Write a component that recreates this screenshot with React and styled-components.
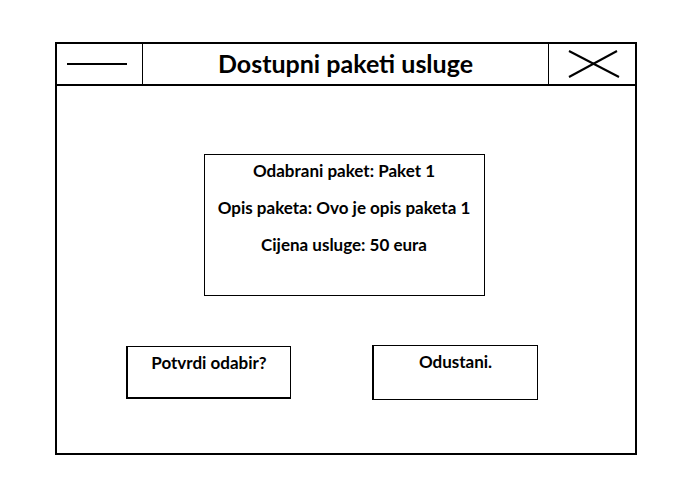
import React from 'react';
import styled, { createGlobalStyle } from 'styled-components';

const GlobalStyle = createGlobalStyle`
  html, body {
    margin: 0;
    padding: 0;
    background: #ffffff;
  }

  body {
    font-family: Lato, "Open Sans", sans-serif;
    color: #000000;
  }
`;

const Page = styled.div`
  width: 692px;
  height: 485px;
  padding: 42px 0 0 55px;
  box-sizing: border-box;
`;

const Frame = styled.div`
  width: 582px;
  height: 413px;
  box-sizing: border-box;
  border: 2px solid #000;
  display: flex;
  flex-direction: column;
`;

const Header = styled.div`
  height: 44px;
  margin: -2px -2px 0 -2px;
  display: flex;
  align-items: stretch;
  border-bottom: 2px solid #000;
  border-top: 2px solid #000;
  box-sizing: border-box;
`;

const HeaderBox = styled.button`
  width: ${({ $width }) => $width}px;
  padding: 0;
  margin: -2px 0 -2px 0;
  background: #fff;
  border: 2px solid #000;
  ${({ $side }) => ($side === 'left' ? 'border-right-width: 1px;' : 'border-left-width: 1px;')}
  display: flex;
  align-items: center;
  justify-content: center;
  cursor: pointer;
`;

const Title = styled.h1`
  flex: 1;
  margin: 0;
  text-align: center;
  font-size: 25px;
  font-weight: 700;
  line-height: 38px;
`;

const Body = styled.div`
  flex: 1;
  display: flex;
  flex-direction: column;
  align-items: center;
  padding: 68px 4px 0 0;
`;

const InfoBox = styled.div`
  width: 281px;
  height: 142px;
  box-sizing: border-box;
  border: 1px solid #000;
  display: flex;
  flex-direction: column;
  align-items: center;
  padding-top: 4px;
  gap: 13px;
`;

const InfoLine = styled.p`
  margin: 0;
  font-size: 17px;
  font-weight: 700;
  line-height: 24px;
`;

const Actions = styled.div`
  align-self: stretch;
  display: flex;
  align-items: flex-start;
  gap: 81px;
  padding-left: 69px;
  margin-top: 49px;
`;

const ActionButton = styled.button`
  width: ${({ $width }) => $width}px;
  height: ${({ $height }) => $height}px;
  margin-top: ${({ $offset }) => $offset}px;
  box-sizing: border-box;
  background: #fff;
  border: 1px solid #000;
  border-left-width: 2px;
  border-bottom-width: ${({ $thickBottom }) => ($thickBottom ? 2 : 1)}px;
  font-family: Lato, "Open Sans", sans-serif;
  font-size: 17px;
  font-weight: 700;
  line-height: 24px;
  color: #000;
  display: flex;
  justify-content: center;
  align-items: flex-start;
  padding: 4px 0 0 0;
  cursor: pointer;
`;

function MinusIcon() {
  return (
    <svg width="62" height="4" viewBox="0 0 62 4" style={{ marginLeft: -6 }}>
      <line x1="1" y1="2" x2="61" y2="2" stroke="#000" strokeWidth="2" />
    </svg>
  );
}

function CloseIcon() {
  return (
    <svg width="54" height="30" viewBox="0 0 54 30" style={{ marginLeft: 4 }}>
      <line x1="2" y1="2" x2="52" y2="28" stroke="#000" strokeWidth="2" />
      <line x1="2" y1="28" x2="50" y2="2" stroke="#000" strokeWidth="2" />
    </svg>
  );
}

export default function App() {
  return (
    <Page>
      <GlobalStyle />
      <Frame>
        <Header>
          <HeaderBox $side="left" $width={88} aria-label="Minimize">
            <MinusIcon />
          </HeaderBox>
          <Title>Dostupni paketi usluge</Title>
          <HeaderBox $side="right" $width={89} aria-label="Close">
            <CloseIcon />
          </HeaderBox>
        </Header>
        <Body>
          <InfoBox>
            <InfoLine>Odabrani paket: Paket 1</InfoLine>
            <InfoLine>Opis paketa: Ovo je opis paketa 1</InfoLine>
            <InfoLine>Cijena usluge: 50 eura</InfoLine>
          </InfoBox>
          <Actions>
            <ActionButton $width={165} $height={53} $offset={1} $thickBottom>
              Potvrdi odabir?
            </ActionButton>
            <ActionButton $width={166} $height={55} $offset={0}>
              Odustani.
            </ActionButton>
          </Actions>
        </Body>
      </Frame>
    </Page>
  );
}
